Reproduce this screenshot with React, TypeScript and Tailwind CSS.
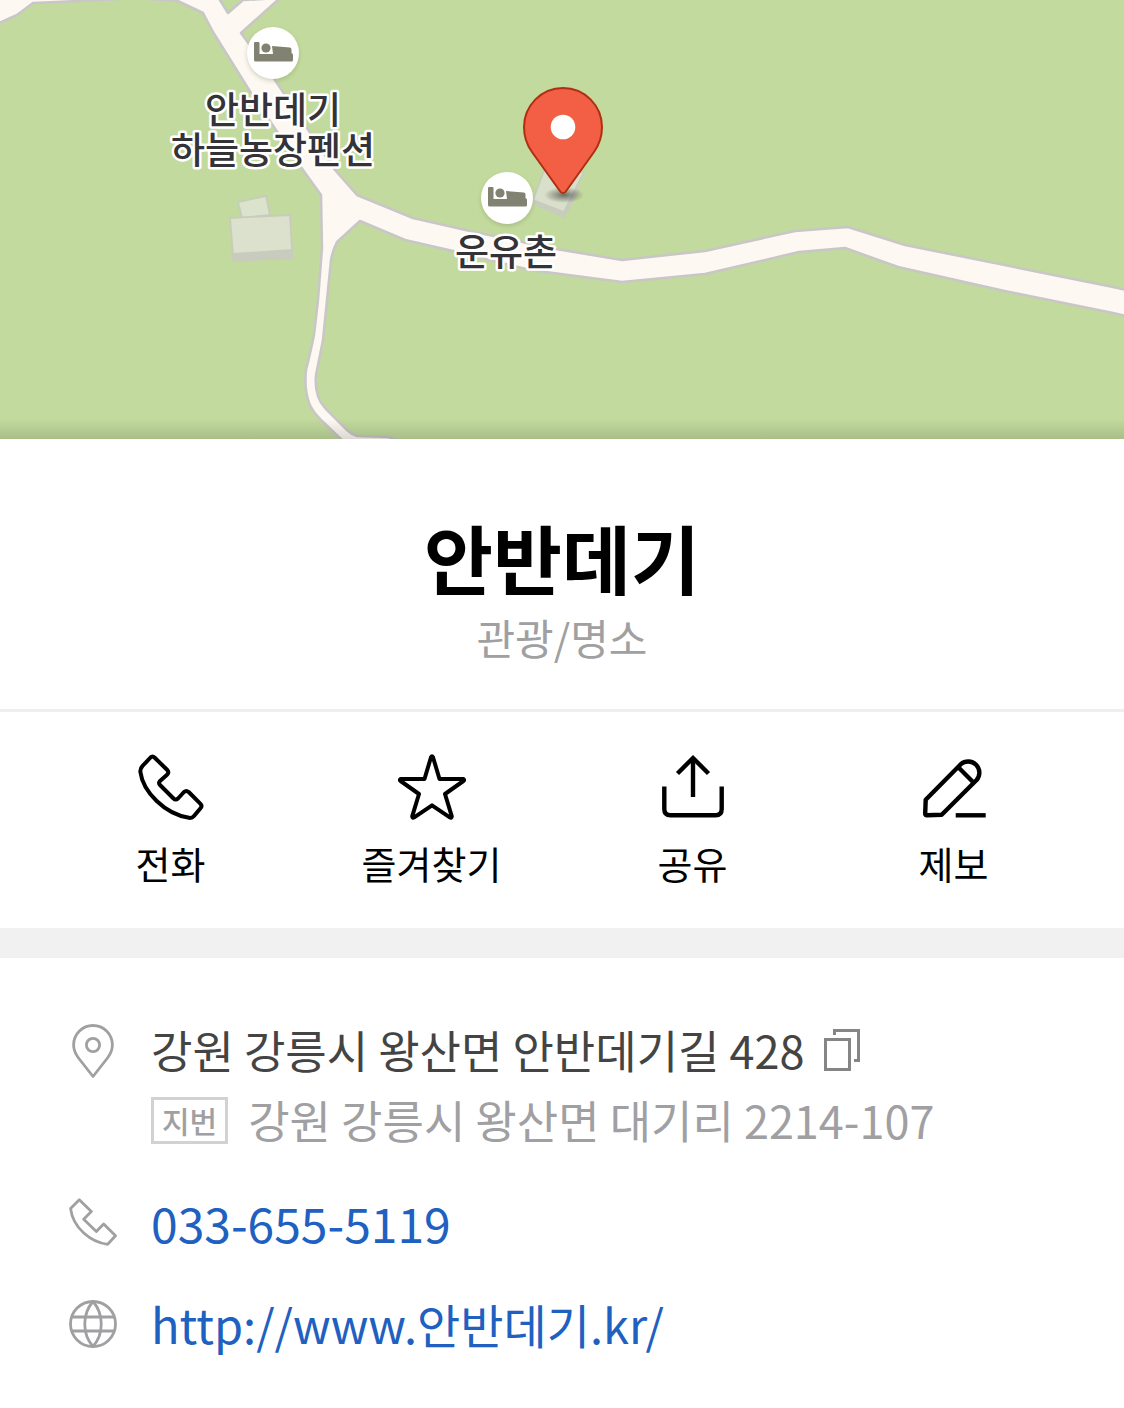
import React from "react";

const actions = [
  { label: "전화", icon: <CallIcon /> },
  { label: "즐겨찾기", icon: <StarIcon /> },
  { label: "공유", icon: <ShareIcon /> },
  { label: "제보", icon: <PencilIcon /> },
];

function CallIcon() {
  return (
    <svg viewBox="0 0 68 68" className="size-[68px]" fill="none" stroke="currentColor" strokeWidth="4" strokeLinejoin="round" aria-hidden="true">
      <path d="M13.5 4.5 Q15.5 2.5 17.5 4.5 L30.3 17 Q32.3 19.3 30.3 21.5 L23 28 Q21 30 23 32 L36.5 45.500 Q38.700 47.500 41 45.500 L47 39 Q49.3 37 51.7 39 L63.5 50.800 Q65.5 53 63.5 55.300 L57 63 Q55 65.3 52 64.8 C28 61 6 39 3.4 19 Q3 15.5 5.5 13 Z" />
    </svg>
  );
}

function StarIcon() {
  return (
    <svg viewBox="0 0 68 68" className="size-[68px]" fill="none" stroke="currentColor" strokeWidth="4" strokeLinejoin="round" aria-hidden="true">
      <path d="M33 4.2 Q34 2.4 35 4.2 L41.5 26 H65 Q67 26.6 65.4 28 L47 41 L53.8 63.4 Q53.6 65.6 51.8 64.4 L34 52.3 L16.2 64.4 Q14.4 65.6 14.2 63.4 L21 41 L2.6 28 Q1 26.6 3 26 H26.5 Z" />
    </svg>
  );
}

function ShareIcon() {
  return (
    <svg viewBox="0 0 68 68" className="size-[68px]" fill="none" stroke="currentColor" strokeWidth="4.4" aria-hidden="true">
      <path d="M34 44 V5" />
      <path d="M18.5 20.5 L34 5 L49.5 20.5" />
      <path d="M5.3 33.5 V56 Q5.3 62.3 11.5 62.3 H56.5 Q62.7 62.3 62.7 56 V33.5" />
    </svg>
  );
}

function PencilIcon() {
  return (
    <svg viewBox="0 0 68 68" className="size-[68px]" fill="none" stroke="currentColor" strokeWidth="4.4" strokeLinejoin="round" aria-hidden="true">
      <path d="M5.7 46.7 L40.8 11.2 A11.2 11.2 0 0 1 56.6 27 L21.7 61.7 L7 62.2 Q5.2 62.2 5.2 60.4 Z" />
      <path d="M38.3 14.3 L53.5 29.5" />
      <path d="M35.7 62.3 H65.7" />
    </svg>
  );
}

function MarkerIcon() {
  return (
    <svg viewBox="0 0 48 56" className="h-14 w-12" fill="none" stroke="currentColor" strokeWidth="2.8" strokeLinejoin="round" aria-hidden="true">
      <path d="M24 2.5 C13 2.5 4.6 11.3 4.6 22 C4.6 27.5 6.5 31 9.5 35 L24 53.5 L38.5 35 C41.5 31 43.4 27.5 43.4 22 C43.4 11.3 35 2.5 24 2.5 Z" />
      <circle cx="24" cy="22" r="6.6" />
    </svg>
  );
}

function PhoneIcon() {
  return (
    <svg viewBox="0 0 48 48" className="size-12" fill="none" stroke="currentColor" strokeWidth="2.8" strokeLinejoin="round" aria-hidden="true">
      <path d="M10.3 1.7 L22.3 13.5 L14.7 21.3 L27.3 33.5 L34.7 26 L46.5 37.7 L38.7 46.3 C22 44.5 4 30 1.6 10.6 Z" />
    </svg>
  );
}

function GlobeIcon() {
  return (
    <svg viewBox="0 0 48 48" className="size-12" fill="none" stroke="currentColor" strokeWidth="2.8" aria-hidden="true">
      <circle cx="24" cy="24" r="22.5" />
      <path d="M24 1.5 C13 14 13 34 24 46.5 C35 34 35 14 24 1.5 Z" />
      <path d="M2.5 17 H45.5 M2.5 31 H45.5" />
    </svg>
  );
}

function CopyIcon() {
  return (
    <svg viewBox="0 0 36 42" className="h-[42px] w-9" fill="none" stroke="#858585" strokeWidth="3" aria-hidden="true">
      <rect x="1.5" y="10.5" width="24" height="30" />
      <path d="M10.5 6 V1.5 H34.5 V31.5 H30" />
    </svg>
  );
}

function Lodging({ x, y }: { x: number; y: number }) {
  return (
    <g transform={`translate(${x} ${y})`}>
      <circle cy="2" r="26" fill="#6b7a55" opacity="0.3" filter="url(#soft)" />
      <circle r="26" fill="#fff" />
      <path d="M-18 -11 H-14.5 Q-13.5 -11 -13.5 -10 V1 H0 L-1 -7 L17 -5.5 Q18.5 -5 18.5 -3.5 V0 Q20 0.5 20 2 V7 Q20 8.5 18.5 8.5 H-17.5 Q-19 8.5 -19 7 V-10 Q-19 -11 -18 -11 Z" fill="#828273" />
      <circle cx="-7" cy="-5" r="5.8" fill="#fff" />
      <circle cx="-7" cy="-5" r="4.6" fill="#828273" />
    </g>
  );
}

function PlaceMap() {
  return (
    <svg
      viewBox="0 0 1124 439"
      preserveAspectRatio="xMidYMid slice"
      className="block h-[439px] w-full bg-[#c2da9d]"
      role="img"
      aria-label="안반데기"
    >
      <defs>
        <filter id="soft" x="-50%" y="-50%" width="200%" height="200%">
          <feGaussianBlur stdDeviation="2" />
        </filter>
        <radialGradient id="pinShade">
          <stop offset="0" stopColor="#000" stopOpacity="0.5" />
          <stop offset="1" stopColor="#000" stopOpacity="0" />
        </radialGradient>
        <linearGradient id="edge" x1="0" y1="0" x2="0" y2="1">
          <stop offset="0" stopColor="#000" stopOpacity="0" />
          <stop offset="1" stopColor="#000" stopOpacity="0.13" />
        </linearGradient>
      </defs>
      <rect width="1124" height="439" fill="#c2da9d" />

      {/* roads */}
      <path
        d="M-5 -12 V25 L17 15 L33 3 L100 0 L135 -2 L178 1 L203 13 L213 32 L251 93 L303 170 L321 195 L322 248 L318 300 L314 335 Q311 350 306 370 Q304 388 309 403 Q312 411 321 420 L342 440 L350 448 H420 L388 437 L357 436 Q351 434 347 430 L325 408 Q314 396 316 375 L323 340 L327 300 L331 260 Q333 249 337 242 L360 221 L405 240 L453 251 L530 270 L622 282 L705 274 L799 252 L845 248 L898 267 L1000 290 L1113 313 L1130 317 V291 L1113 287 L905 245 L848 227 L795 231 L705 251 L622 260 L550 248 L470 231 L413 218 L357 195 L335 170 L275 80 L241 33 L280 -2 L243 0 L228 13 L218 -3 V-12 Z"
        fill="#fdf8f1"
        stroke="#c9c6c8"
        strokeWidth="2.5"
        strokeLinejoin="round"
      />

      {/* buildings */}
      <g stroke="#c8ccbd" strokeWidth="1.8" strokeLinejoin="round">
        <path d="M238 202 L266 196 L270 215 L242 218 Z" fill="#dbe3cd" />
        <path d="M232 254 L292 250 V258 L233 261 Z" fill="#c9cbbf" />
        <path d="M230 218 L290 215 L292 250 L233 254 Z" fill="#dbe1cd" />
        <path d="M533 200 L563 212 L576 188 L579 190 L564 217 L532 203 Z" fill="#c9cbbf" />
        <path d="M545 168 L584 172 L564 212 L533 200 Z" fill="#d8dfca" />
      </g>

      <Lodging x={273} y={53} />
      <Lodging x={507} y={198} />

      <g
        className="font-['Noto_Sans_CJK_KR',sans-serif] text-[37px] font-medium"
        textAnchor="middle"
        fill="#333338"
        stroke="#fff"
        strokeWidth="5"
        strokeLinejoin="round"
        paintOrder="stroke"
      >
        <text>
          <tspan x="273" y="124">안반데기</tspan>
          <tspan x="273" y="164">하늘농장펜션</tspan>
        </text>
        <text x="506" y="266">운유촌</text>
      </g>

      <ellipse cx="564" cy="195" rx="20" ry="8" fill="url(#pinShade)" />
      <path
        d="M563 88 C541 88 524 106 524 127 C524 138 527 145 532 152 L559.5 190.5 Q563 196 566.5 190.5 L594 152 C599 145 602 138 602 127 C602 106 585 88 563 88 Z"
        fill="#f35f44"
        stroke="#b02f12"
        strokeWidth="2"
      />
      <circle cx="563" cy="127" r="12.3" fill="#fff" />
      <rect y="419" width="1124" height="20" fill="url(#edge)" />
    </svg>
  );
}

function App() {
  return (
    <main className="min-h-screen bg-white font-['Noto_Sans_CJK_KR',sans-serif] text-black">
      <PlaceMap />

      <header className="border-b-[3px] border-[#eeeeee] pt-16 pb-[46px] text-center">
        <h1 className="text-[75px] leading-[108px] font-bold">안반데기</h1>
        <p className="text-[42px] leading-[52px] text-[#a0a0a3]">관광/명소</p>
      </header>

      <div className="grid grid-cols-4 border-b-[30px] border-[#f1f1f1] px-10 pt-[41px] pb-9">
        {actions.map((action) => (
          <button key={action.label} type="button" className="flex flex-col items-center gap-3">
            {action.icon}
            <span className="text-[38px] leading-[59px]">{action.label}</span>
          </button>
        ))}
      </div>

      <address className="flex flex-col gap-8 px-[69px] pt-[57px] pb-10 text-[45px] leading-[70px] not-italic">
        <div className="flex items-start gap-[34px]">
          <span className="pt-2 text-[#a0a0a3]">
            <MarkerIcon />
          </span>
          <div>
            <p className="flex items-center gap-5 text-[#444444]">
              강원 강릉시 왕산면 안반데기길 428
              <button type="button" aria-label="복사">
                <CopyIcon />
              </button>
            </p>
            <p className="flex items-center gap-5 text-[#a0a0a3]">
              <span className="border-[3px] border-[#d2d2d2] px-2 text-[30px] leading-[41px] font-medium">
                지번
              </span>
              강원 강릉시 왕산면 대기리 2214-107
            </p>
          </div>
        </div>
        <div className="flex items-center gap-[34px] text-[#a0a0a3]">
          <PhoneIcon />
          <a href="tel:033-655-5119" className="text-[48px] text-[#2060c0]">
            033-655-5119
          </a>
        </div>
        <div className="flex items-center gap-[34px] text-[#a0a0a3]">
          <GlobeIcon />
          <a href="http://www.안반데기.kr/" className="text-[47px] text-[#2060c0]">
            http://www.안반데기.kr/
          </a>
        </div>
      </address>
    </main>
  );
}

export default App;
